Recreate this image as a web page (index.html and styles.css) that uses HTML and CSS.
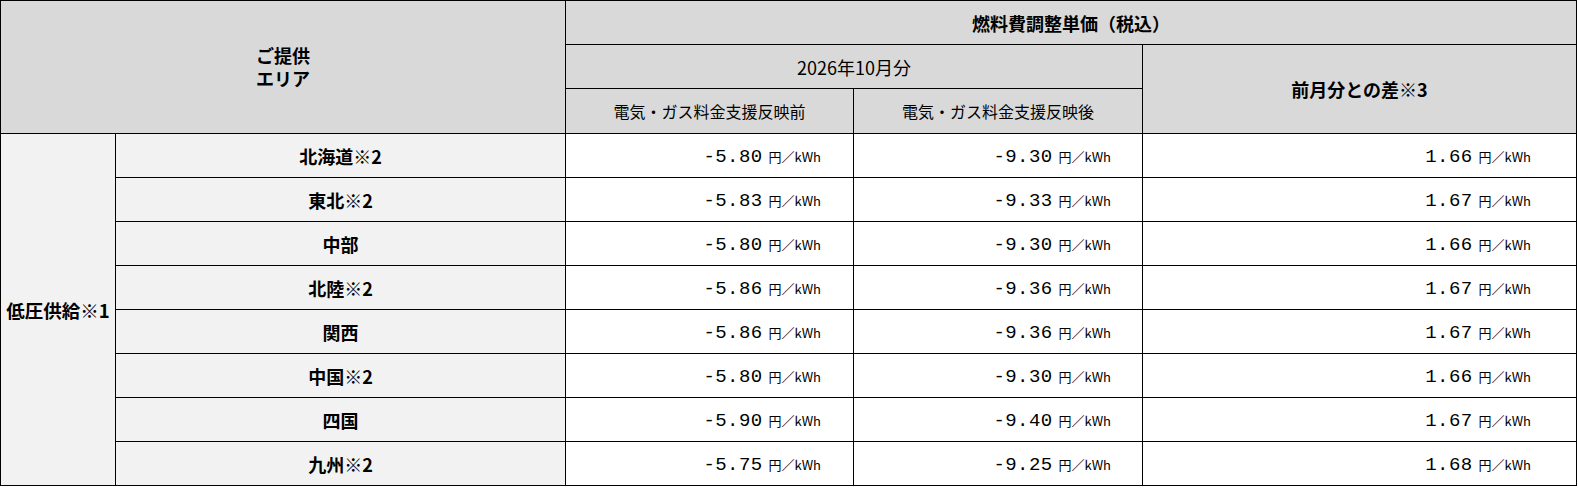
FILE: index.html
```html
<!DOCTYPE html>
<html lang="ja">
<head>
<meta charset="utf-8">
<title>燃料費調整単価</title>
<link rel="stylesheet" href="styles.css">
</head>
<body>
<table class="rates">
  <colgroup>
    <col class="c1"><col class="c2"><col class="c3"><col class="c4"><col class="c5">
  </colgroup>
  <thead>
    <tr class="h1">
      <th class="area-head" colspan="2" rowspan="3">ご提供<br>エリア</th>
      <th class="title" colspan="3">燃料費調整単価（税込）</th>
    </tr>
    <tr class="h2">
      <th class="month" colspan="2">2026年10月分</th>
      <th class="diff-head" rowspan="2">前月分との差※3</th>
    </tr>
    <tr class="h3">
      <th class="sub">電気・ガス料金支援反映前</th>
      <th class="sub">電気・ガス料金支援反映後</th>
    </tr>
  </thead>
  <tbody>
    <tr>
      <th class="supply" rowspan="8">低圧供給※1</th>
      <th class="area">北海道※2</th>
      <td class="val v3"><span class="num">-5.80</span><span class="unit">円／kWh</span></td>
      <td class="val v4"><span class="num">-9.30</span><span class="unit">円／kWh</span></td>
      <td class="val v5"><span class="num">1.66</span><span class="unit">円／kWh</span></td>
    </tr>
    <tr>
      <th class="area">東北※2</th>
      <td class="val v3"><span class="num">-5.83</span><span class="unit">円／kWh</span></td>
      <td class="val v4"><span class="num">-9.33</span><span class="unit">円／kWh</span></td>
      <td class="val v5"><span class="num">1.67</span><span class="unit">円／kWh</span></td>
    </tr>
    <tr>
      <th class="area">中部</th>
      <td class="val v3"><span class="num">-5.80</span><span class="unit">円／kWh</span></td>
      <td class="val v4"><span class="num">-9.30</span><span class="unit">円／kWh</span></td>
      <td class="val v5"><span class="num">1.66</span><span class="unit">円／kWh</span></td>
    </tr>
    <tr>
      <th class="area">北陸※2</th>
      <td class="val v3"><span class="num">-5.86</span><span class="unit">円／kWh</span></td>
      <td class="val v4"><span class="num">-9.36</span><span class="unit">円／kWh</span></td>
      <td class="val v5"><span class="num">1.67</span><span class="unit">円／kWh</span></td>
    </tr>
    <tr>
      <th class="area">関西</th>
      <td class="val v3"><span class="num">-5.86</span><span class="unit">円／kWh</span></td>
      <td class="val v4"><span class="num">-9.36</span><span class="unit">円／kWh</span></td>
      <td class="val v5"><span class="num">1.67</span><span class="unit">円／kWh</span></td>
    </tr>
    <tr>
      <th class="area">中国※2</th>
      <td class="val v3"><span class="num">-5.80</span><span class="unit">円／kWh</span></td>
      <td class="val v4"><span class="num">-9.30</span><span class="unit">円／kWh</span></td>
      <td class="val v5"><span class="num">1.66</span><span class="unit">円／kWh</span></td>
    </tr>
    <tr>
      <th class="area">四国</th>
      <td class="val v3"><span class="num">-5.90</span><span class="unit">円／kWh</span></td>
      <td class="val v4"><span class="num">-9.40</span><span class="unit">円／kWh</span></td>
      <td class="val v5"><span class="num">1.67</span><span class="unit">円／kWh</span></td>
    </tr>
    <tr>
      <th class="area">九州※2</th>
      <td class="val v3"><span class="num">-5.75</span><span class="unit">円／kWh</span></td>
      <td class="val v4"><span class="num">-9.25</span><span class="unit">円／kWh</span></td>
      <td class="val v5"><span class="num">1.68</span><span class="unit">円／kWh</span></td>
    </tr>
  </tbody>
</table>
</body>
</html>
```

FILE: styles.css
```css
html, body {
  margin: 0;
  padding: 0;
  background: #ffffff;
}

body {
  font-family: "Noto Sans CJK JP", "Noto Sans", sans-serif;
  color: #000000;
}

.rates {
  border-collapse: collapse;
  table-layout: fixed;
  width: 1577px;
}

.c1 { width: 115px; }
.c2 { width: 450px; }
.c3 { width: 288px; }
.c4 { width: 289px; }
.c5 { width: 434px; }

.rates th,
.rates td {
  border: 1px solid #000000;
  padding: 0;
  text-align: center;
  vertical-align: middle;
}

.rates thead th {
  background: #d9d9d9;
}

.rates tr {
  height: 44px;
}

.rates .h3 {
  height: 45px;
}

.rates .area-head {
  font-size: 18px;
  font-weight: 700;
  line-height: 23px;
}

.rates .title {
  font-size: 18px;
  font-weight: 700;
  line-height: 22px;
}

.rates .month {
  font-size: 18px;
  font-weight: 400;
  line-height: 22px;
}

.rates .diff-head {
  font-size: 18px;
  font-weight: 700;
  line-height: 22px;
}

.rates .sub {
  font-size: 16px;
  font-weight: 400;
  line-height: 20px;
}

.rates tbody th {
  background: #f2f2f2;
  font-weight: 700;
}

.rates .supply {
  font-size: 18.5px;
  line-height: 22px;
  white-space: nowrap;
}

.rates .area {
  font-size: 18px;
  line-height: 22px;
}

.rates .val {
  text-align: right;
  white-space: nowrap;
  line-height: 22px;
}

.rates .v3 { padding-right: 32px; }
.rates .v4 { padding-right: 31px; }
.rates .v5 { padding-right: 45px; }

.num {
  font-family: "Liberation Mono", "DejaVu Sans Mono", monospace;
  font-size: 19px;
  letter-spacing: 0.4px;
}

.unit {
  font-family: "Noto Sans CJK JP", "Noto Sans", sans-serif;
  font-size: 13px;
  margin-left: 6px;
}
```
